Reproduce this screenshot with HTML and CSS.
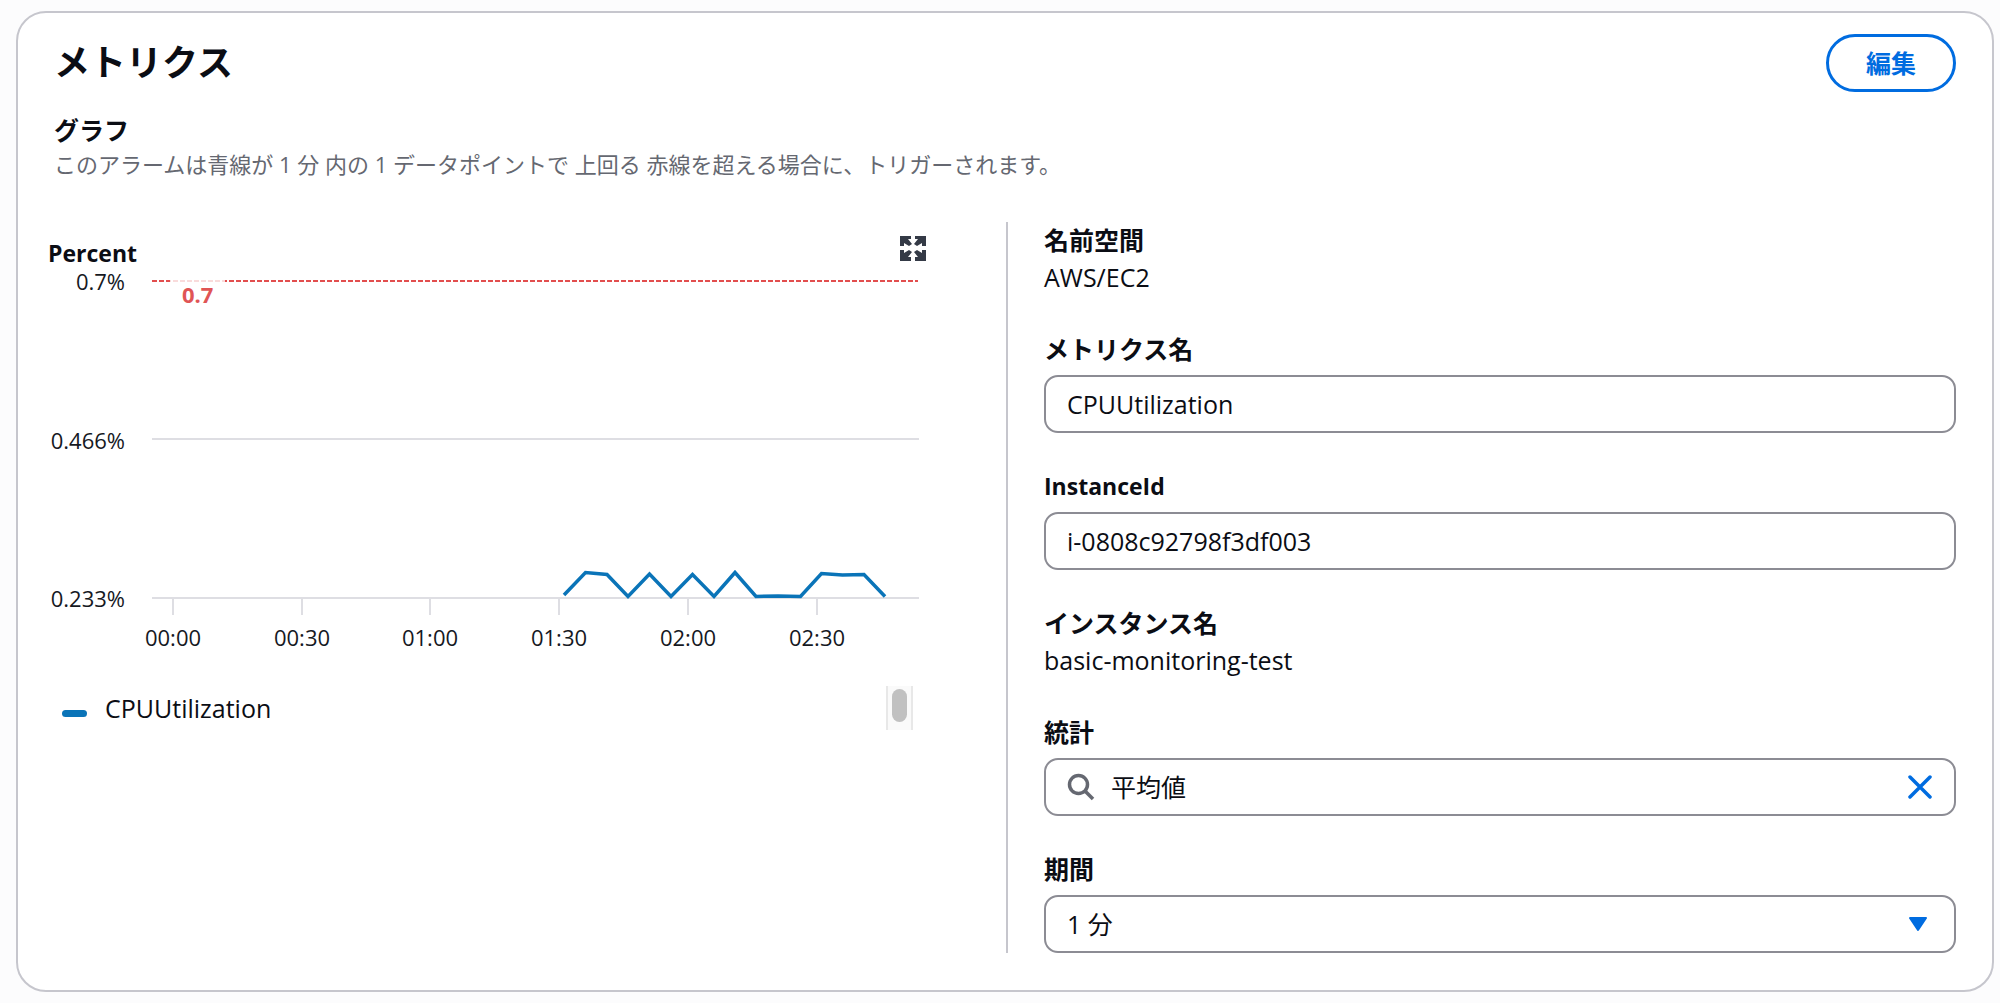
FILE: index.html
```html
<!DOCTYPE html>
<html lang="ja">
<head>
<meta charset="utf-8">
<meta name="viewport" content="width=device-width, initial-scale=1">
<title>メトリクス</title>
<link rel="stylesheet" href="styles.css">
</head>
<body>
<main class="card">
  <header class="card-header">
    <h1 class="card-title">メトリクス</h1>
    <button class="edit-button" type="button">編集</button>
  </header>
  <section class="intro">
    <h2 class="intro-title">グラフ</h2>
    <p class="intro-text">このアラームは青線が 1 分 内の 1 データポイントで 上回る 赤線を超える場合に、トリガーされます。</p>
  </section>
  <div class="columns">
    <section class="graph">
      <div class="graph-header">
        <h3 class="graph-unit">Percent</h3>
        <button class="icon-button" type="button" aria-label="拡大">
          <svg width="26" height="26" viewBox="0 0 26 26" fill="#343a46">
            <path d="M0 1H11V4H8L12 9L9 11L4 8V11H0Z"/>
            <path d="M26 1H15V4H18L14 9L17 11L22 8V11H26Z"/>
            <path d="M0 26H11V22H8L12 17L9 15L4 18V15H0Z"/>
            <path d="M26 26H15V22H18L14 17L17 15L22 18V15H26Z"/>
          </svg>
        </button>
      </div>
      <svg class="plot" viewBox="0 0 880 387" role="img" aria-label="CPUUtilization">
        <g class="grid-lines">
          <path d="M104 172H871M104 331H871"/>
          <path d="M125 331V348M254 331V348M382 331V348M511 331V348M640 331V348M769 331V348"/>
        </g>
        <path class="threshold" d="M104 14H870"/>
        <rect class="threshold-label-bg" x="122" y="10" width="55" height="36"/>
        <text class="threshold-label" x="134" y="36">0.7</text>
        <g class="tick-y">
          <text x="77" y="23">0.7%</text>
          <text x="77" y="182">0.466%</text>
          <text x="77" y="340">0.233%</text>
        </g>
        <g class="tick-x">
          <text x="125" y="379">00:00</text>
          <text x="254" y="379">00:30</text>
          <text x="382" y="379">01:00</text>
          <text x="511" y="379">01:30</text>
          <text x="640" y="379">02:00</text>
          <text x="769" y="379">02:30</text>
        </g>
        <path class="series" d="M516 328L537.500 305.500L559 307.500L580 329.500L601.500 307L623 329.500L644.500 307.500L666 329.500L687 305.500L708 329.500L730 329L752.500 329.500L773.500 306.500L794.500 308L816 307.500L837 329.500"/>
      </svg>
      <div class="legend">
        <span class="legend-swatch"></span>
        <span class="legend-name">CPUUtilization</span>
        <span class="legend-scroll"><span class="legend-thumb"></span></span>
      </div>
    </section>
    <form class="fields">
      <div class="field">
        <div class="label">名前空間</div>
        <div class="value">AWS/EC2</div>
      </div>
      <div class="field">
        <label class="label" for="metric">メトリクス名</label>
        <div class="control"><input class="input" id="metric" type="text" value="CPUUtilization"></div>
      </div>
      <div class="field">
        <label class="label label-latin" for="instance">InstanceId</label>
        <div class="control"><input class="input" id="instance" type="text" value="i-0808c92798f3df003"></div>
      </div>
      <div class="field">
        <div class="label">インスタンス名</div>
        <div class="value">basic-monitoring-test</div>
      </div>
      <div class="field">
        <label class="label" for="statistic">統計</label>
        <div class="control">
          <svg class="search-icon" width="28" height="28" viewBox="0 0 28 28" fill="none" stroke="#656871" stroke-width="3.500"><circle cx="11.500" cy="11.500" r="9"/><path d="M18 18L26 26"/></svg>
          <input class="input" id="statistic" type="text" value="平均値">
          <button class="icon-button clear-button" type="button" aria-label="クリア">
            <svg width="24" height="24" viewBox="0 0 24 24" stroke="#006ce0" stroke-width="3.500" stroke-linecap="round"><path d="M2 2L22 22M22 2L2 22"/></svg>
          </button>
        </div>
      </div>
      <div class="field">
        <label class="label" for="period">期間</label>
        <div class="control">
          <select class="input" id="period"><option>1 分</option></select>
          <svg class="caret" width="20" height="16" viewBox="0 0 20 16" fill="#006ce0" stroke="#006ce0" stroke-width="2" stroke-linejoin="round"><path d="M2 2H18L10 14Z"/></svg>
        </div>
      </div>
    </form>
  </div>
</main>
</body>
</html>
```
FILE: styles.css
```css
* {
  box-sizing: border-box;
}

body {
  margin: 0;
  padding: 11px 6px 11px 16px;
  background: #fcfcfd;
  color: #0b0d14;
  font-family: "Open Sans", "Noto Sans CJK JP", sans-serif;
  font-size: 25px;
  line-height: 36px;
}

h1,
h2,
h3,
p {
  margin: 0;
}

button {
  font: inherit;
  cursor: pointer;
}

svg {
  display: block;
}

.card {
  padding: 21px 36px 37px 30px;
  border: 2px solid #c6c6cd;
  border-radius: 30px;
  background: #fff;
}

.card-header {
  display: flex;
  align-items: center;
  justify-content: space-between;
  padding-left: 6px;
}

.card-title {
  font-size: 36px;
  line-height: 44px;
}

.edit-button {
  height: 58px;
  padding: 0 37px;
  border: 3px solid #006ce0;
  border-radius: 29px;
  background: #fff;
  color: #006ce0;
  font-size: 25px;
  font-weight: 700;
  line-height: 36px;
}

.intro {
  padding: 20px 0 0 6px;
}

.intro-title {
  font-size: 25px;
  line-height: 36px;
}

.intro-text {
  color: #656871;
  font-size: 22px;
  line-height: 32px;
}

.columns {
  display: grid;
  grid-template-columns: minmax(0, 1fr) minmax(0, 1fr);
  column-gap: 8px;
  margin-top: 42px;
}

.graph {
  padding: 13px 70px 0 0;
}

.graph-header {
  display: flex;
  justify-content: space-between;
  height: 32px;
  padding-right: 2px;
}

.graph-unit {
  align-self: flex-end;
  font-size: 23px;
  line-height: 28px;
}

.icon-button {
  display: block;
  align-self: flex-start;
  padding: 0;
  border: 0;
  background: none;
}

.plot {
  width: 100%;
  overflow: visible;
  font-size: 22px;
}

.grid-lines {
  fill: none;
  stroke: #dedee3;
  stroke-width: 2;
}

.threshold {
  stroke: #d91515;
  stroke-width: 1.5;
  stroke-dasharray: 5 2;
}

.threshold-label-bg {
  fill: #fff;
  fill-opacity: 0.8;
}

.threshold-label {
  fill: #e05555;
  font-weight: 700;
}

.tick-y {
  fill: #16191f;
  text-anchor: end;
}

.tick-x {
  fill: #16191f;
  text-anchor: middle;
}

.series {
  fill: none;
  stroke: #0a74b8;
  stroke-width: 3.5;
}

.legend {
  display: flex;
  align-items: center;
  gap: 18px;
  height: 44px;
  margin-top: 32px;
  padding: 0 15px 0 14px;
}

.legend-swatch {
  width: 25px;
  height: 7px;
  margin-top: 10px;
  border-radius: 4px;
  background: #0a74b8;
}

.legend-scroll {
  width: 27px;
  height: 44px;
  margin-left: auto;
  padding: 3px 4px;
  border: solid #e8e8e8;
  border-width: 0 2px;
  background: #fafafa;
}

.legend-thumb {
  display: block;
  height: 33px;
  border-radius: 8px;
  background: #c1c1c1;
}

.fields {
  display: flex;
  flex-direction: column;
  gap: 35px;
  padding-left: 36px;
  border-left: 2px solid #c6c6cd;
}

.label {
  display: block;
  font-weight: 700;
}

.label-latin {
  font-size: 23px;
}

.value {
  line-height: 38px;
}

.label,
.edit-button,
.control {
  white-space: nowrap;
}

.control {
  display: flex;
  align-items: center;
  gap: 16px;
  height: 58px;
  margin-top: 8px;
  padding: 0 22px 0 21px;
  border: 2px solid #8c8c94;
  border-radius: 14px;
  background: #fff;
}

.input {
  flex: 1;
  min-width: 0;
  height: 36px;
  padding: 0;
  border: 0;
  outline: 0;
  background: none;
  appearance: none;
  color: inherit;
  font: inherit;
}

.clear-button {
  align-self: center;
}

.caret {
  margin-right: 4px;
}
```
